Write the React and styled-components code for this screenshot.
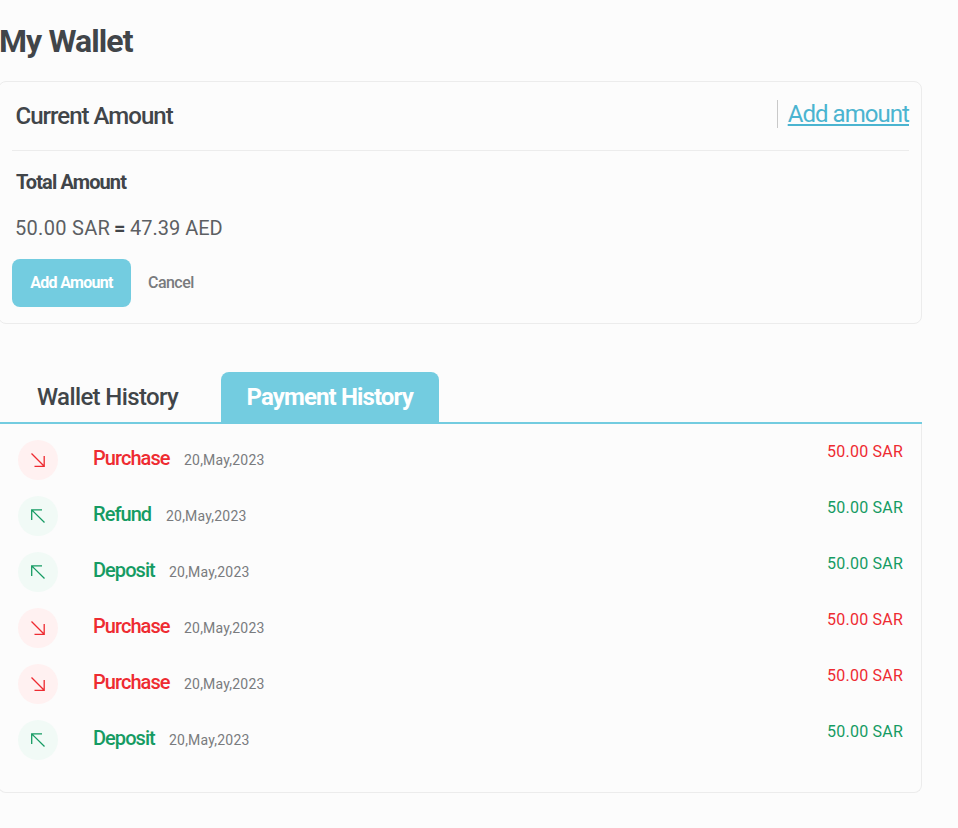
import React from 'react';
import styled, { createGlobalStyle } from 'styled-components';

const GlobalStyle = createGlobalStyle`
  * { box-sizing: border-box; }
  body {
    margin: 0;
    background: #fcfcfc;
    color: #414549;
    font-family: Roboto, "Open Sans", sans-serif;
    overflow: hidden;
  }
  h1, h2, h3, p, ul { margin: 0; padding: 0; }
  button { font: inherit; border: 0; background: none; padding: 0; cursor: pointer; }
`;

const Page = styled.main`
  width: 924px;
  margin-left: -2px;
  padding-top: 21px;
`;

const Title = styled.h1`
  padding-left: 1px;
  height: 60px;
  font-size: 32px;
  line-height: 40px;
  font-weight: 700;
  letter-spacing: -0.9px;
`;

const Card = styled.section`
  display: flex;
  flex-direction: column;
  height: 243px;
  padding: 0 12px 0 13px;
  border: 1px solid #ececec;
  border-radius: 8px;
`;

const CardHeader = styled.header`
  display: flex;
  justify-content: space-between;
  align-items: flex-start;
  height: 69px;
  padding: 18px 0 0 3px;
  border-bottom: 1px solid #ececec;
`;

const CardTitle = styled.h2`
  margin: 2px 0 0 0.5px;
  font-size: 24px;
  line-height: 28px;
  font-weight: 500;
  letter-spacing: -0.98px;
`;

const HeaderAction = styled.div`
  height: 28px;
  padding-left: 10px;
  border-left: 1px solid #c9c9c9;
`;

const AddLink = styled.a`
  display: block;
  color: #4bb4d0;
  font-size: 24px;
  line-height: 28px;
  letter-spacing: -0.95px;
  text-decoration: underline;
  text-decoration-thickness: 2px;
  text-underline-offset: 2px;
  cursor: pointer;
`;

const TotalLabel = styled.h3`
  margin: 19px 0 0 4px;
  font-size: 20px;
  line-height: 24px;
  font-weight: 700;
  letter-spacing: -0.88px;
`;

const Conversion = styled.p`
  display: flex;
  margin: 22px 0 0 3px;
  color: #5c5f63;
  font-size: 20px;
  line-height: 24px;
`;

const SourceAmount = styled.span`
  width: 99px;
  letter-spacing: 0.3px;
`;

const Equals = styled.b`
  width: 16px;
  color: #414549;
`;

const Actions = styled.div`
  display: flex;
  gap: 17px;
  margin-top: 19px;
  height: 48px;
`;

const PrimaryButton = styled.button`
  && {
    width: 119px;
    padding-bottom: 2px;
    border-radius: 8px;
    background: #73cce0;
    color: #fff;
    font-size: 16px;
    font-weight: 700;
    letter-spacing: -0.68px;
  }
`;

const TextButton = styled.button`
  && {
    padding-bottom: 2px;
    color: #797b7e;
    font-size: 16px;
    font-weight: 500;
    letter-spacing: -0.55px;
  }
`;

const Tabs = styled.nav`
  display: flex;
  height: 52px;
  margin-top: 48px;
  padding-left: 2px;
  border-bottom: 2px solid #73cce0;
`;

const Tab = styled.button`
  && {
    width: ${({ $active }) => ($active ? 218 : 221)}px;
    padding-left: ${({ $active }) => ($active ? 25.5 : 37)}px;
    border-radius: 8px 8px 0 0;
    background: ${({ $active }) => ($active ? '#73cce0' : 'transparent')};
    color: ${({ $active }) => ($active ? '#fff' : '#414549')};
    font-size: 24px;
    line-height: 28px;
    font-weight: ${({ $active }) => ($active ? 700 : 500)};
    letter-spacing: ${({ $active }) => ($active ? -0.87 : -0.63)}px;
    text-align: left;
  }
`;

const History = styled.ul`
  display: flex;
  flex-direction: column;
  gap: 16px;
  height: 369px;
  padding: 16px 18px 0 19px;
  border: 1px solid #ececec;
  border-top: 0;
  border-radius: 0 0 8px 8px;
  list-style: none;
`;

const Entry = styled.li`
  display: flex;
  height: 40px;
  color: ${({ $incoming }) => ($incoming ? '#159b63' : '#ee2b31')};
`;

const Badge = styled.span`
  display: flex;
  width: 40px;
  height: 40px;
  border-radius: 50%;
  background: ${({ $incoming }) => ($incoming ? '#f1faf6' : '#fff1f1')};
`;

const Kind = styled.span`
  margin: 6px 14px 0 35px;
  width: ${({ $width }) => $width}px;
  font-size: 20px;
  line-height: 24px;
  font-weight: 500;
  letter-spacing: -0.95px;
  white-space: nowrap;
`;

const EntryDate = styled.time`
  margin-top: 10px;
  color: #797b7e;
  font-size: 14px;
  line-height: 20px;
  letter-spacing: 0.2px;
`;

const Amount = styled.span`
  margin: 2px 0 0 auto;
  font-size: 16px;
  line-height: 20px;
  letter-spacing: 0.22px;
`;

const Arrow = ({ incoming }) => (
  <svg width="40" height="40" viewBox="0 0 40 40" fill="none" stroke="currentColor" strokeWidth="1.3">
    <path d={incoming ? 'M26.5 26.5 13.7 13.9M24 13.9H13.7V24' : 'M13.5 13.5 26.2 26.3M26.2 16V26.3H16.5'} />
  </svg>
);

const kindWidths = { Purchase: 77, Refund: 59, Deposit: 62 };
const entries = ['Purchase', 'Refund', 'Deposit', 'Purchase', 'Purchase', 'Deposit'];

export default function App() {
  return (
    <>
      <GlobalStyle />
      <Page>
        <Title>My Wallet</Title>
        <Card>
          <CardHeader>
            <CardTitle>Current Amount</CardTitle>
            <HeaderAction>
              <AddLink>Add amount</AddLink>
            </HeaderAction>
          </CardHeader>
          <TotalLabel>Total Amount</TotalLabel>
          <Conversion>
            <SourceAmount>50.00 SAR</SourceAmount>
            <Equals>=</Equals>
            <span>47.39 AED</span>
          </Conversion>
          <Actions>
            <PrimaryButton>Add Amount</PrimaryButton>
            <TextButton>Cancel</TextButton>
          </Actions>
        </Card>
        <Tabs>
          <Tab>Wallet History</Tab>
          <Tab $active>Payment History</Tab>
        </Tabs>
        <History>
          {entries.map((kind, i) => {
            const incoming = kind !== 'Purchase';
            return (
              <Entry key={i} $incoming={incoming}>
                <Badge $incoming={incoming}>
                  <Arrow incoming={incoming} />
                </Badge>
                <Kind $width={kindWidths[kind]}>{kind}</Kind>
                <EntryDate>20,May,2023</EntryDate>
                <Amount>50.00 SAR</Amount>
              </Entry>
            );
          })}
        </History>
      </Page>
    </>
  );
}
